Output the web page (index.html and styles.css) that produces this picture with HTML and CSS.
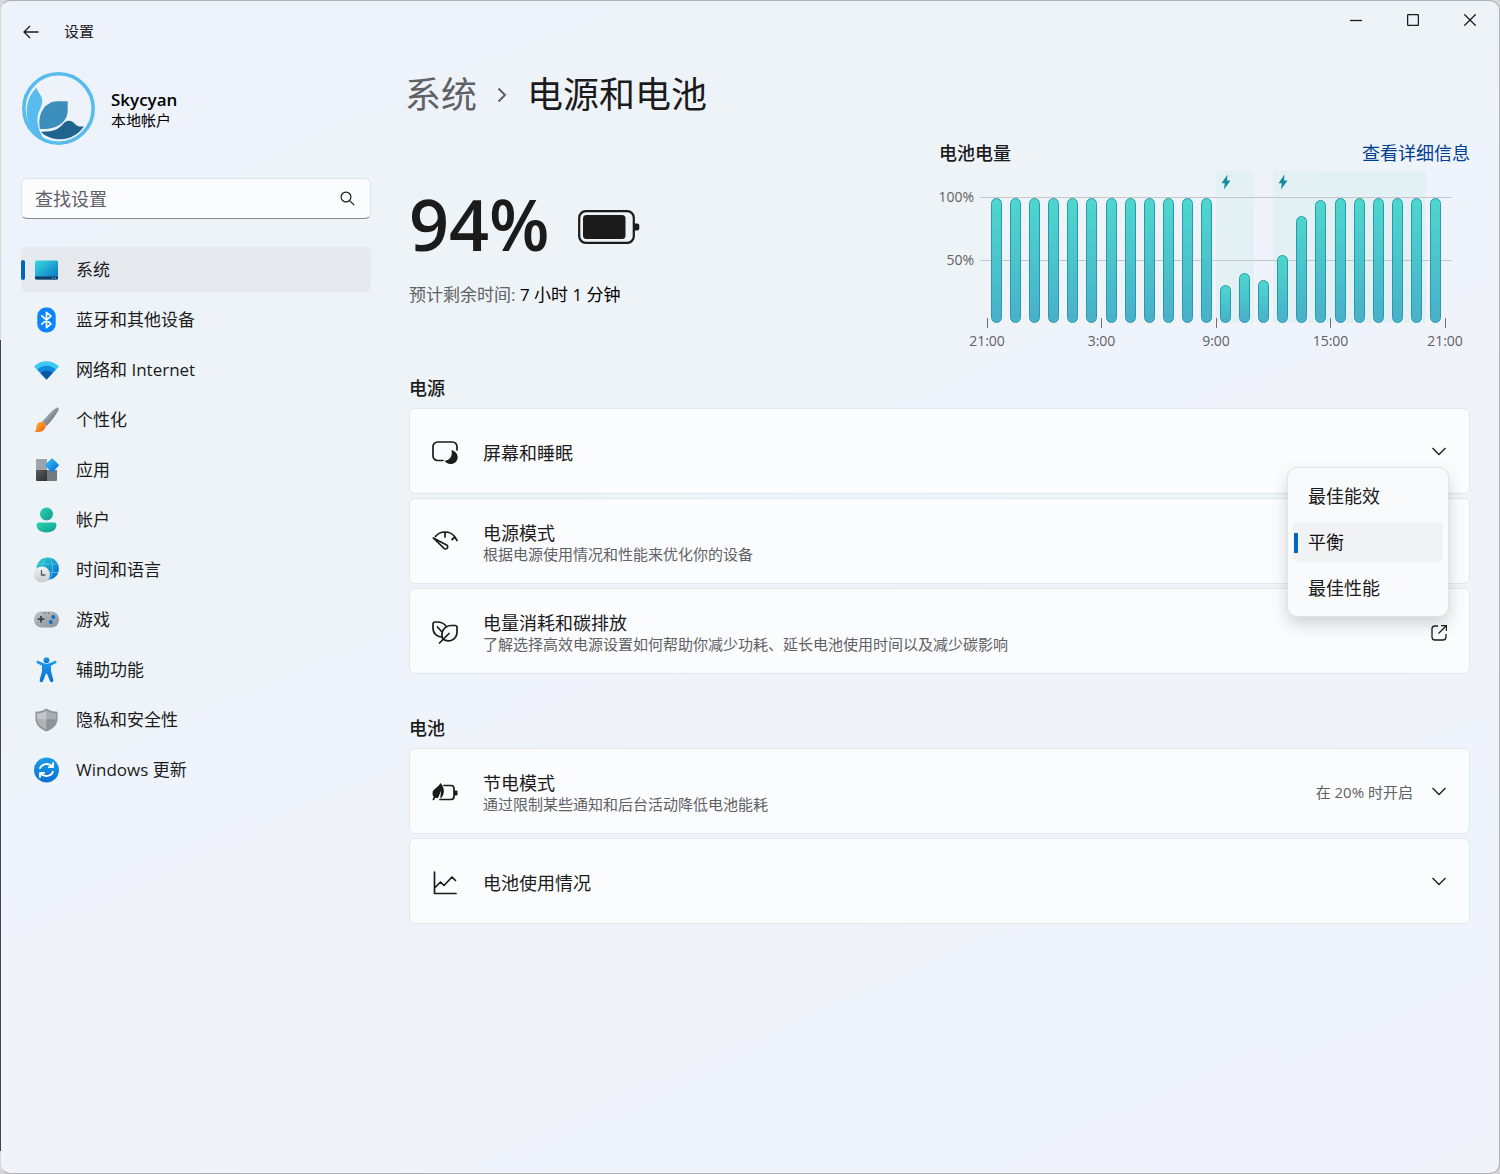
FILE: index.html
```html
<!DOCTYPE html>
<html lang="zh-CN">
<head>
  <meta charset="UTF-8">
  <meta name="viewport" content="width=device-width, initial-scale=1.0">
  <title>设置</title>
  <link rel="stylesheet" href="styles.css">
</head>
<body>
<div class="window">
  <header class="titlebar">
    <button class="back" type="button" aria-label="返回">
      <svg width="16" height="14" viewBox="0 0 16 14"><path d="M15.500 7H1M7 1L1 7l6 6" /></svg>
    </button>
    <span class="app-name">设置</span>
    <div class="window-buttons">
      <button type="button" aria-label="最小化"><svg width="12" height="12" viewBox="0 0 12 12"><path d="M0 6.500h12" /></svg></button>
      <button type="button" aria-label="最大化"><svg width="12" height="12" viewBox="0 0 12 12"><rect x=".6" y=".6" width="10.800" height="10.800" rx="1" /></svg></button>
      <button type="button" aria-label="关闭"><svg width="12" height="12" viewBox="0 0 12 12"><path d="M.3.3l11.400 11.400M11.700.3L.3 11.700" /></svg></button>
    </div>
  </header>

  <div class="layout">
    <aside class="sidebar">
      <div class="account">
        <svg width="73" height="73" viewBox="0 0 73 73">
          <circle cx="36.500" cy="36.500" r="34.700" fill="none" stroke="#57bbee" stroke-width="3.600" />
          <path d="M14.700 15.500C15.500 21 20.500 23 20.300 29C20 36 15 40 15.500 49C16 57 19 63 24 70C13 65 4 52 4.700 38C5.200 28 9 21 14.700 15.500Z" fill="#57bbee" />
          <path d="M45.700 29.200V38C45.700 50 35 58 18 57C15 43 22 29.200 36 29.200Z" fill="#3c8fbd" />
          <path d="M19 59.700C30 60 36 58 41 52C45 47.500 49 48 53 52C55.500 54.500 58 55 62 54.300C57 62 48 67.500 38 67.300C31 67.200 23 64.500 19 59.700Z" fill="#1e648f" />
        </svg>
        <div class="account-info">
          <div class="account-name">Skycyan</div>
          <div class="account-type">本地帐户</div>
        </div>
      </div>

      <label class="search">
        <input type="text" placeholder="查找设置" aria-label="查找设置">
        <svg width="15" height="15" viewBox="0 0 15 15"><circle cx="6" cy="6" r="4.900" /><path d="M9.600 9.600l4.600 4.600" /></svg>
      </label>

      <nav class="nav">
        <a href="#system" class="active">
          <svg width="25" height="26" viewBox="0 0 25 26">
            <defs><linearGradient id="g-sys" x1="0" y1="0" x2="1" y2="1"><stop offset="0" stop-color="#35dbe0" /><stop offset="1" stop-color="#0a6fc4" /></linearGradient></defs>
            <rect x="1" y="3.500" width="23" height="19" rx="1.500" fill="url(#g-sys)" />
            <path d="M1 19.500h23V21a1.500 1.500 0 0 1-1.500 1.500h-20A1.500 1.500 0 0 1 1 21z" fill="#0b3f63" />
            <path d="M18 20.500h1.200v1H18zM20.800 20.500H22v1h-1.200z" fill="#8fd0ef" />
          </svg>
          系统
        </a>
        <a href="#bluetooth">
          <svg width="25" height="26" viewBox="0 0 25 26">
            <rect x="3.300" y=".5" width="18.400" height="25" rx="8.500" fill="#0a84ff" />
            <path d="M7.800 8.800l9.200 8.100-4.500 3.700V5.400L17 9.100l-9.200 8.100" fill="none" stroke="#fff" stroke-width="1.700" stroke-linejoin="round" stroke-linecap="round" />
          </svg>
          蓝牙和其他设备
        </a>
        <a href="#network">
          <svg width="25" height="26" viewBox="0 0 25 26">
            <path d="M0 9.500C7 2.500 18 2.500 25 9.500L12.500 22.500z" fill="#3bc8f5" />
            <path d="M3.200 12.800C8.500 7.500 16.500 7.500 21.800 12.800L12.500 22.500z" fill="#1488dc" />
            <path d="M6.600 16.300C10 13 15 13 18.400 16.300L12.500 22.500z" fill="#0c56a4" />
          </svg>
          网络和 Internet
        </a>
        <a href="#personalization">
          <svg width="25" height="26" viewBox="0 0 25 26">
            <defs>
              <linearGradient id="g-pen" x1="0" y1="0" x2="1" y2="1"><stop offset=".2" stop-color="#b5bcc4" /><stop offset=".8" stop-color="#5f6870" /></linearGradient>
              <linearGradient id="g-tip" x1="0" y1="0" x2="1" y2="1"><stop offset="0" stop-color="#ffc22e" /><stop offset="1" stop-color="#ee5212" /></linearGradient>
            </defs>
            <path d="M22.500.8c1.600-.8 3 .8 2 2.400C21 9.500 17 14.500 12.500 19L8 14.500C13 9.500 17 4 22.500.8z" fill="url(#g-pen)" />
            <path d="M5.200 15.300c3.600-2 7.800 1.300 6.200 5.200C9.600 25 4.500 26 .4 24.400c2.500-1 1.600-2.600 2-5.100.3-1.900 1.200-3.200 2.800-4z" fill="url(#g-tip)" />
          </svg>
          个性化
        </a>
        <a href="#apps">
          <svg width="25" height="26" viewBox="0 0 25 26">
            <defs>
              <linearGradient id="g-app" x1="0" y1="0" x2="1" y2="1"><stop offset="0" stop-color="#32c8f7" /><stop offset="1" stop-color="#0866d6" /></linearGradient>
              <linearGradient id="g-dark" x1="0" y1="0" x2="1" y2="1"><stop offset="0" stop-color="#5a5d60" /><stop offset="1" stop-color="#2c2e30" /></linearGradient>
            </defs>
            <path d="M3 2h10v11H2V3a1 1 0 0 1 1-1z" fill="#9da4ac" />
            <path d="M2 13h11v11H3a1 1 0 0 1-1-1z" fill="url(#g-dark)" />
            <path d="M13 13h10v10a1 1 0 0 1-1 1h-9z" fill="#737980" />
            <path d="M17 1.900q1-1 2 0l5.300 5.300q1 1 0 2L19 14.500q-1 1-2 0l-5.300-5.300q-1-1 0-2z" fill="url(#g-app)" />
          </svg>
          应用
        </a>
        <a href="#accounts">
          <svg width="25" height="26" viewBox="0 0 25 26">
            <defs><linearGradient id="g-user" x1="0" y1="0" x2="1" y2="1"><stop offset="0" stop-color="#2ad4b8" /><stop offset="1" stop-color="#109b86" /></linearGradient></defs>
            <circle cx="12.500" cy="7" r="6.500" fill="url(#g-user)" />
            <path d="M4.800 15.500h15.400a2.300 2.300 0 0 1 2.300 2.300c0 5-4.500 7.700-10 7.700s-10-2.700-10-7.700a2.300 2.300 0 0 1 2.300-2.300z" fill="url(#g-user)" />
          </svg>
          帐户
        </a>
        <a href="#time">
          <svg width="25" height="26" viewBox="0 0 25 26">
            <defs>
              <linearGradient id="g-globe" x1="0" y1="0" x2="1" y2="1"><stop offset="0" stop-color="#2fd3c8" /><stop offset=".6" stop-color="#1292d2" /><stop offset="1" stop-color="#0b66c6" /></linearGradient>
              <linearGradient id="g-clock" x1="0" y1="0" x2="0" y2="1"><stop offset="0" stop-color="#f2f2f3" /><stop offset="1" stop-color="#c9cbce" /></linearGradient>
            </defs>
            <circle cx="13.700" cy="11.700" r="11.200" fill="url(#g-globe)" />
            <g fill="none" stroke="#6fdcf0" stroke-width="1" opacity=".6"><ellipse cx="13.700" cy="11.700" rx="5" ry="11.200" /><path d="M4 7h19.500M3 15.500h21" /></g>
            <circle cx="8" cy="17.500" r="8" fill="url(#g-clock)" />
            <path d="M7.500 13v5h4" fill="none" stroke="#55585c" stroke-width="1.300" />
          </svg>
          时间和语言
        </a>
        <a href="#gaming">
          <svg width="25" height="26" viewBox="0 0 25 26">
            <defs><linearGradient id="g-pad" x1="0" y1="0" x2="1" y2="1"><stop offset="0" stop-color="#bcc2c8" /><stop offset="1" stop-color="#8c9299" /></linearGradient></defs>
            <rect y="4.500" width="25" height="16" rx="7.500" fill="url(#g-pad)" />
            <path d="M7 9v6.500M3.700 12.200h6.600" stroke="#3d4246" stroke-width="1.700" />
            <path d="M10 6h1.300M13.700 6H15" stroke="#3d4246" stroke-width="1.200" />
            <circle cx="19.300" cy="10" r="2" fill="#0a6fd0" /><circle cx="16.800" cy="15" r="2" fill="#0a6fd0" />
          </svg>
          游戏
        </a>
        <a href="#accessibility">
          <svg width="25" height="26" viewBox="0 0 25 26">
            <defs><linearGradient id="g-acc" x1="0" y1="0" x2="0" y2="1"><stop offset="0" stop-color="#1c9cf0" /><stop offset="1" stop-color="#0a70d0" /></linearGradient></defs>
            <circle cx="12.500" cy="3.200" r="2.900" fill="url(#g-acc)" />
            <path d="M4.500 3.900l4.600 2.200q3.400 1.300 6.800 0l4.600-2.200c1.800-.8 2.800 1.500 1.300 2.300L17 8.700v5.400l2.300 9c.5 2.100-2.500 3-3.300 1l-3-7.300h-1l-3 7.300c-.8 2-3.800 1.100-3.300-1l2.300-9V8.700L3.200 6.200c-1.500-.8-.5-3.100 1.300-2.300z" fill="url(#g-acc)" />
          </svg>
          辅助功能
        </a>
        <a href="#privacy">
          <svg width="25" height="26" viewBox="0 0 25 26">
            <path d="M12.500 1.500C16 4 19.500 4.700 23.500 4.800V12c0 6-4.500 9.800-11 12.500C6 21.800 1.500 18 1.500 12V4.800C5.500 4.700 9 4 12.500 1.500z" fill="#8e9499" />
            <path d="M12.500 3.500C9.500 5.500 6.500 6.300 3 6.500v6h9.500z" fill="#c3c7ca" />
            <path d="M12.500 3.500c3 2 6 2.800 9.500 3v6h-9.500z" fill="#a9aeb2" />
            <path d="M3 12.500h9.500v10C7 20 3.200 17 3 12.500z" fill="#b0b4b8" />
            <path d="M22 12.500h-9.500v10C18 20 21.800 17 22 12.500z" fill="#8f9499" />
          </svg>
          隐私和安全性
        </a>
        <a href="#update">
          <svg width="25" height="26" viewBox="0 0 25 26">
            <defs><linearGradient id="g-upd" x1="0" y1="0" x2="0" y2="1"><stop offset="0" stop-color="#1a9fe6" /><stop offset="1" stop-color="#0b6fd3" /></linearGradient></defs>
            <circle cx="12.500" cy="13" r="12.500" fill="url(#g-upd)" />
            <path d="M6 11.200C8 6.500 14.500 5.500 18.500 9.500M19 6v4.200h-4.200M19 14.800C17 19.500 10.500 20.500 6.500 16.500M6 20v-4.200h4.200" fill="none" stroke="#fff" stroke-width="1.800" stroke-linecap="round" stroke-linejoin="round" />
          </svg>
          Windows 更新
        </a>
      </nav>
    </aside>

    <main class="content">
      <h1 class="breadcrumb">
        <a href="#system">系统</a>
        <svg width="10" height="16" viewBox="0 0 10 16"><path d="M1.500 1.500L8 8l-6.500 6.500" /></svg>
        <span>电源和电池</span>
      </h1>

      <section class="overview">
        <div class="battery">
          <div class="level">
            <span class="percent">94%</span>
            <svg width="62" height="34" viewBox="0 0 62 34">
              <rect x="1.200" y="1.200" width="54.600" height="31.600" rx="6.500" fill="none" stroke="#1b1b1b" stroke-width="2.200" />
              <rect x="5" y="5" width="42.500" height="24" rx="3.500" fill="#1b1b1b" />
              <path d="M56 13.500h3.300a2 2 0 0 1 2 2v3a2 2 0 0 1-2 2H56z" fill="#1b1b1b" />
            </svg>
          </div>
          <p class="remaining">预计剩余时间: <span>7 小时 1 分钟</span></p>
        </div>

        <div class="levels">
          <div class="levels-head">
            <h2>电池电量</h2>
            <a href="#details">查看详细信息</a>
          </div>
          <div class="chart">
            <div class="y-axis"><span>100%</span><span>50%</span></div>
            <div class="plot">
              <div class="charging first"><svg width="10" height="16" viewBox="0 0 10 16"><path d="M6.500.5L.5 9.300h3.300L3 15.500l6.500-9H6z" /></svg></div>
              <div class="charging second"><svg width="10" height="16" viewBox="0 0 10 16"><path d="M6.500.5L.5 9.300h3.300L3 15.500l6.500-9H6z" /></svg></div>
              <div class="lines"></div>
              <div class="bars">
                <span style="height: 99%"></span>
                <span style="height: 99%"></span>
                <span style="height: 99%"></span>
                <span style="height: 99%"></span>
                <span style="height: 99%"></span>
                <span style="height: 99%"></span>
                <span style="height: 99%"></span>
                <span style="height: 99%"></span>
                <span style="height: 99%"></span>
                <span style="height: 99%"></span>
                <span style="height: 99%"></span>
                <span style="height: 99%"></span>
                <span style="height: 30%"></span>
                <span style="height: 40%"></span>
                <span style="height: 34%"></span>
                <span style="height: 54%"></span>
                <span style="height: 85%"></span>
                <span style="height: 98%"></span>
                <span style="height: 99%"></span>
                <span style="height: 99%"></span>
                <span style="height: 99%"></span>
                <span style="height: 99%"></span>
                <span style="height: 99%"></span>
                <span style="height: 99%"></span>
              </div>
            </div>
            <div class="x-axis"><span>21:00</span><span>3:00</span><span>9:00</span><span>15:00</span><span>21:00</span></div>
          </div>
        </div>
      </section>

      <section class="group">
        <h2>电源</h2>
        <button class="card" type="button">
          <svg class="icon" width="26" height="26" viewBox="0 0 26 26">
            <path d="M11 20.500H5.500A4.500 4.500 0 0 1 1 16V6.500A4.500 4.500 0 0 1 5.500 2h15A4.500 4.500 0 0 1 25 6.500V10" />
            <path class="solid" d="M19.500 10c4 1.500 6.300 4 6.200 7.200-.2 4-3.200 6.800-7.200 6.800-2.700 0-4.800-1.200-6-3.200 5.300-.5 8.300-4.500 7-10.800z" />
          </svg>
          <span class="card-text"><span class="card-title">屏幕和睡眠</span></span>
          <svg class="chevron" width="16" height="16" viewBox="0 0 16 16"><path d="M1.500 3L8 9.500 14.500 3" /></svg>
        </button>
        <div class="card">
          <svg class="icon" width="26" height="26" viewBox="0 0 26 26">
            <path d="M3.500 6.500C8 .5 18 .5 22.500 6.500L25 10.500M1.300 8l10.500 10.200a2.200 2.200 0 0 0 3.300-3zM13 2.500v4.500M20 9.500l3-2.500" />
          </svg>
          <label class="card-text" for="power-mode"><span class="card-title">电源模式</span><span class="card-desc">根据电源使用情况和性能来优化你的设备</span></label>
          <select class="mode-menu" id="power-mode" size="3">
            <option>最佳能效</option>
            <option selected>平衡</option>
            <option>最佳性能</option>
          </select>
        </div>
        <a class="card" href="#energy">
          <svg class="icon" width="26" height="26" viewBox="0 0 26 26">
            <path d="M13.500 5.500C11.500 3 8.500 2 5 2H3a2 2 0 0 0-2 2v4c0 5.500 4 9 9.500 9M10.500 18.500C8.500 12 12 6 19 5.500h4a2 2 0 0 1 2 2V12c0 7-8 12-14.500 6.500zM7.500 23l9.500-9.500M5.500 7l4.500 5" />
          </svg>
          <span class="card-text"><span class="card-title">电量消耗和碳排放</span><span class="card-desc">了解选择高效电源设置如何帮助你减少功耗、延长电池使用时间以及减少碳影响</span></span>
          <svg class="chevron" width="16" height="16" viewBox="0 0 16 16"><path d="M7 1H4a3 3 0 0 0-3 3v8a3 3 0 0 0 3 3h8a3 3 0 0 0 3-3V9M10 .7h5.500V6M15 1L7.500 8.500" /></svg>
        </a>
      </section>

      <section class="group">
        <h2>电池</h2>
        <button class="card" type="button">
          <svg class="icon" width="26" height="26" viewBox="0 0 26 26">
            <path d="M12 5.500h7a3 3 0 0 1 3 3v8a3 3 0 0 1-3 3H8" />
            <path class="solid" d="M22 10.500h2.500q1 0 1 1v3q0 1-1 1H22zM8.500 3c4 4.500 4.500 10 1.200 14.500L8.200 18l1-7.500-3.200 7.500C2.500 18.500.3 16.500.5 13 .8 8.500 6 8 8.500 3z" />
            <path d="M5 14.500c-2.200 1.500-3.300 3-3.600 5" />
          </svg>
          <span class="card-text"><span class="card-title">节电模式</span><span class="card-desc">通过限制某些通知和后台活动降低电池能耗</span></span>
          <span class="status">在 20% 时开启</span>
          <svg class="chevron" width="16" height="16" viewBox="0 0 16 16"><path d="M1.500 3L8 9.500 14.500 3" /></svg>
        </button>
        <button class="card" type="button">
          <svg class="icon" width="26" height="26" viewBox="0 0 26 26">
            <path d="M2.500 2v21.500H24M3 17.500l5.500-5.500 3.500 3.500 8-8.500 3.500 3.500" />
          </svg>
          <span class="card-text"><span class="card-title">电池使用情况</span></span>
          <svg class="chevron" width="16" height="16" viewBox="0 0 16 16"><path d="M1.500 3L8 9.500 14.500 3" /></svg>
        </button>
      </section>
    </main>
  </div>
</div>
</body>
</html>
```

FILE: styles.css
```css
* {
  box-sizing: border-box;
}
body {
  margin: 0;
  background: linear-gradient(#d8d8d8 29%, #45464b 29%, #45464b 98%, #d8d8d8 98%);
  font-family: "Open Sans", "Noto Sans CJK SC", sans-serif;
  font-size: 18px;
  line-height: 28px;
  color: #1b1b1b;
}
h1, h2, p {
  margin: 0;
  font-weight: normal;
}
button, input, select {
  font: inherit;
  color: inherit;
}
button {
  border: none;
  background: none;
  padding: 0;
}
a {
  color: inherit;
  text-decoration: none;
}
svg {
  flex: none;
}

.window {
  min-height: 100vh;
  border: 1px solid #b0b1b3;
  border-left-color: transparent;
  border-radius: 10px;
  background: linear-gradient(156deg, #eef3fb 12%, #eef3f7 26%, #eef3f8 38%, #eff3fb 46%, #f0f3f9 58%, #f0f3f9 68%, #eff3fb 80%, #f0f3fa) padding-box;
}

/* title bar */
.titlebar {
  display: flex;
  height: 62px;
  padding-left: 21px;
}
.back {
  width: 18px;
}
.titlebar svg {
  fill: none;
  stroke: #1b1b1b;
  stroke-width: 1.3;
}
.app-name {
  margin-left: 24px;
  font-size: 15px;
  line-height: 60px;
}
.window-buttons {
  display: flex;
  height: 36px;
  margin-left: auto;
  margin-right: 1px;
}
.window-buttons button {
  width: 57px;
}

/* sidebar */
.layout {
  display: flex;
  gap: 38px;
  padding: 8px 29px 40px 20px;
}
.sidebar {
  flex: none;
  width: 350px;
}
.account {
  display: flex;
  align-items: center;
  gap: 16px;
  padding: 1px;
}
.account-info {
  padding-top: 2px;
}
.account-name {
  font-size: 17px;
  font-weight: 600;
  line-height: 20px;
  color: #000;
}
.account-type {
  font-size: 15px;
  line-height: 20px;
  color: #000;
}
.search {
  display: flex;
  align-items: center;
  height: 41px;
  margin-top: 32px;
  padding-right: 15px;
  border: 1px solid #e0e4ea;
  border-bottom-color: #868a8f;
  border-radius: 6px;
  background: #fbfcfe;
}
.search input {
  flex: 1;
  min-width: 0;
  padding: 0 13px;
  border: none;
  outline: none;
  background: none;
}
.search input::placeholder {
  color: #5f6164;
}
.search svg {
  fill: none;
  stroke: #1b1b1b;
  stroke-width: 1.2;
}
.nav {
  display: flex;
  flex-direction: column;
  gap: 5px;
  margin-top: 28px;
}
.nav a {
  position: relative;
  display: flex;
  align-items: center;
  gap: 17px;
  height: 45px;
  padding-left: 13px;
  border-radius: 6px;
  font-size: 17px;
}
.nav .active {
  background: #e6e9ee;
}
.nav .active::before {
  content: "";
  position: absolute;
  left: 0;
  width: 4px;
  height: 20px;
  border-radius: 2px;
  background: #0067c0;
}

/* content */
.content {
  flex: 1;
  min-width: 0;
}
.breadcrumb {
  display: flex;
  align-items: center;
  gap: 20px;
  margin-left: -4px;
  font-size: 36px;
  line-height: 48px;
}
.breadcrumb a {
  color: #5f6164;
}
.breadcrumb svg {
  fill: none;
  stroke: #5f6164;
  stroke-width: 2;
}
.overview {
  display: flex;
  justify-content: space-between;
  margin-top: 20px;
}
.battery {
  padding-top: 42px;
}
.level {
  display: flex;
  align-items: center;
  gap: 28px;
}
.percent {
  padding-bottom: 6px;
  font-size: 70px;
  font-weight: 600;
  line-height: 86px;
}
.remaining {
  margin-top: 8px;
  font-size: 17px;
  color: #5f6164;
}
.remaining span {
  color: #000;
}

/* battery level chart */
.levels {
  width: 531px;
}
.levels-head {
  display: flex;
  justify-content: space-between;
}
h2 {
  font-size: 18px;
  font-weight: 500;
}
.levels-head a {
  color: #003e92;
}
.chart {
  display: grid;
  grid-template-columns: 35px 1fr;
  column-gap: 13px;
  margin-top: 4px;
  padding-right: 25px;
  font-size: 14px;
  color: #5f6164;
}
.y-axis {
  display: flex;
  flex-direction: column;
  align-items: flex-end;
  gap: 35px;
  padding-top: 12px;
}
.plot {
  display: grid;
  grid-template-columns: repeat(24, 1fr);
  grid-template-rows: 26px 126px;
}
.charging {
  grid-row: 1 / 3;
  padding: 3px 5px;
  background: #e3f1f5;
  line-height: 16px;
}
.charging.first {
  grid-column: 13 / 15;
}
.charging.second {
  grid-column: 16 / 24;
}
.charging svg {
  fill: #118c9c;
}
.lines {
  grid-area: 2 / 1 / 3 / 25;
  margin: 0 -7px;
  border-top: 1px solid #c3c7ca;
  background: linear-gradient(#c3c7ca, #c3c7ca) 0 62px / 100% 1px no-repeat;
}
.bars {
  grid-area: 2 / 1 / 3 / 25;
  display: grid;
  grid-template-columns: repeat(24, 1fr);
  align-items: end;
  justify-items: center;
}
.bars span {
  width: 11px;
  border: 1px solid #2a98ac;
  border-radius: 6px;
  background: linear-gradient(rgba(68, 214, 204, 0.95), rgba(64, 173, 199, 0.95));
}
.x-axis {
  grid-column: 2;
  display: flex;
  justify-content: space-between;
  margin: -5px -25px 0;
}
.x-axis span {
  width: 50px;
  line-height: 26px;
  text-align: center;
}
.x-axis span::before {
  content: "";
  display: block;
  width: 1px;
  height: 10px;
  margin: 0 auto;
  background: #6d7074;
}

/* setting cards */
.group {
  display: flex;
  flex-direction: column;
  gap: 4px;
  margin-top: 20px;
}
.group + .group {
  margin-top: 40px;
}
.group h2 {
  margin-bottom: 2px;
}
.card {
  position: relative;
  display: flex;
  align-items: center;
  height: 86px;
  padding: 0 22px;
  border: 1px solid #e2e6ed;
  border-radius: 6px;
  background: #fbfcfe;
  text-align: left;
}
.icon {
  margin-top: 4px;
  margin-right: 25px;
  fill: none;
  stroke: #1b1b1b;
  stroke-width: 1.7;
  stroke-linejoin: round;
  stroke-linecap: round;
}
.icon .solid {
  fill: #1b1b1b;
  stroke: none;
}
.card-text {
  flex: 1;
  padding-top: 4px;
}
.card-title {
  display: block;
  line-height: 22px;
}
.card-desc {
  display: block;
  font-size: 15px;
  line-height: 20px;
  color: #5f6164;
}
.status {
  margin-right: 18px;
  padding-top: 2px;
  font-size: 15px;
  color: #5f6164;
}
.chevron {
  margin-top: 3px;
  fill: none;
  stroke: #1b1b1b;
  stroke-width: 1.3;
}

/* opened power mode list, lies over the neighbouring cards */
.mode-menu {
  position: absolute;
  z-index: 1;
  top: -32px;
  right: 20px;
  width: 162px;
  height: 150px;
  padding: 8px 5px;
  border: 1px solid #dfe2e6;
  border-radius: 10px;
  outline: none;
  overflow: hidden;
  background: #f9fafc;
  box-shadow: 0 8px 16px rgba(0, 0, 0, 0.16);
  appearance: none;
}
.mode-menu option {
  height: 41px;
  margin-bottom: 5px;
  padding: 6px 15px;
  border-radius: 5px;
  line-height: 28px;
}
.mode-menu option:checked {
  background: linear-gradient(#0067c0, #0067c0) 1px 50% / 4px 20px no-repeat, linear-gradient(#f1f2f4, #f1f2f4);
}
```
